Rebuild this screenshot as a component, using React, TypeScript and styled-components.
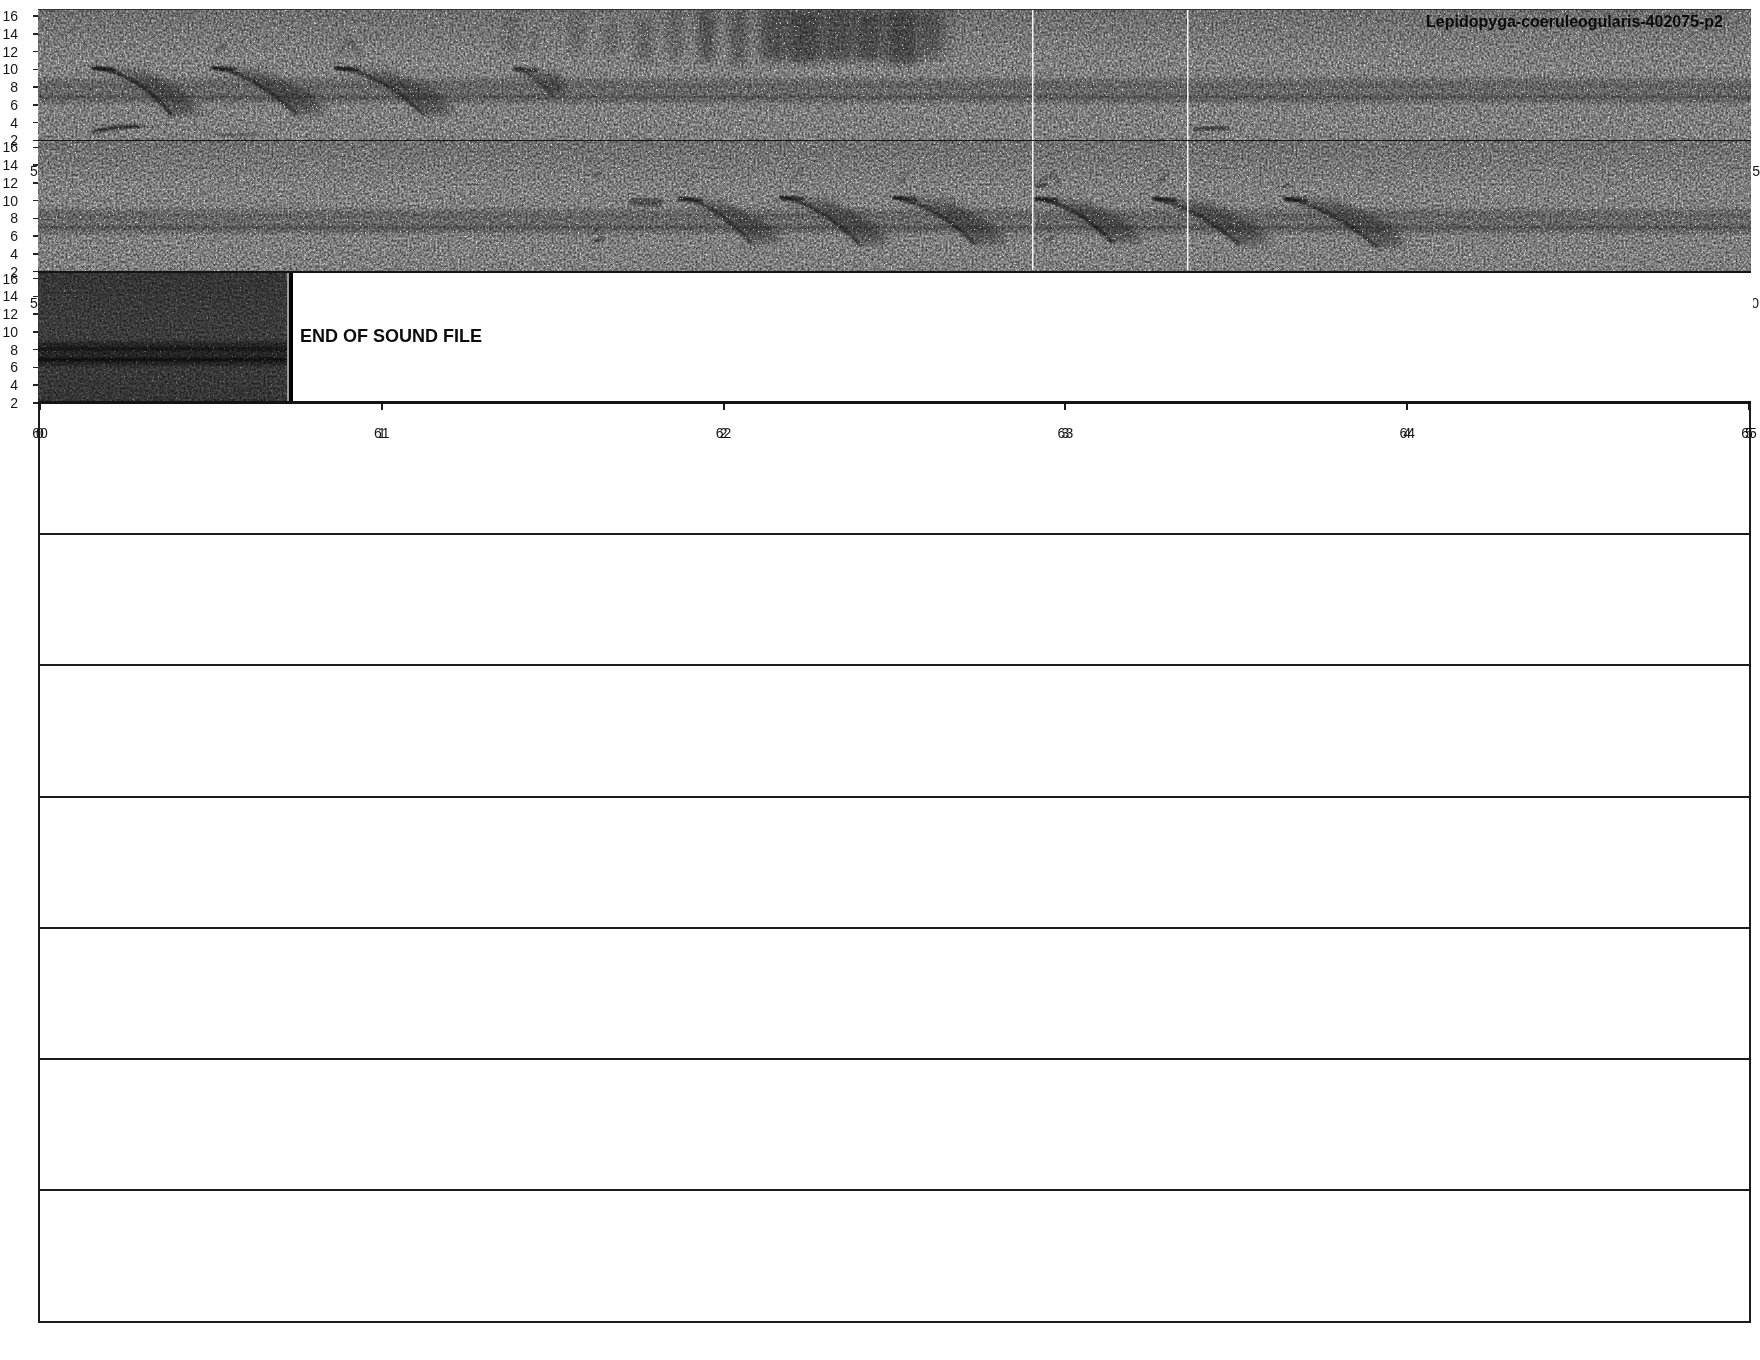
import styled, { createGlobalStyle } from "styled-components"

const GlobalStyle = createGlobalStyle`
    html, body {
        margin: 0;
        padding: 0;
        background: #fff;
    }
    body {
        font-family: "Liberation Sans", Arial, sans-serif;
        color: #151515;
    }
`
const Page = styled.div`
    width: 1760px;
    height: 1360px;
    padding-top: 10px;
    box-sizing: border-box;
    overflow: hidden;
`
const Row = styled.div`
    display: grid;
    grid-template-columns: 38px 1713px 9px;
    grid-template-rows: 131.25px;
`
const FreqAxis = styled.div`
    display: flex;
    flex-direction: column;
    justify-content: space-between;
    padding-top: 6px;
    padding-bottom: 1px;
    box-sizing: border-box;
`
const FreqLabel = styled.div`
    display: flex;
    align-items: center;
    height: 0;
    font-size: 14px;
`
const FreqText = styled.span`
    width: 18px;
    text-align: right;
`
const FreqTick = styled.i`
    width: 5px;
    height: 1.5px;
    margin-left: 15px;
    background: #222;
`
const Plot = styled.div<{ $top?: boolean; $rule: number }>`
    position: relative;
    display: flex;
    box-sizing: border-box;
    min-width: 0;
    min-height: 0;
    border-bottom: ${p => p.$rule}px solid #141414;
    ${p => p.$top && "margin-top: -1px; border-top: 1px solid #333;"}
`
const BlankPlot = styled.div`
    display: flex;
    justify-content: space-between;
    box-sizing: border-box;
    border: 2px solid #1c1c1c;
    border-top: none;
`
const Gram = styled.svg<{ $w: string; $dark?: boolean }>`
    display: block;
    width: ${p => p.$w};
    height: 100%;
    flex: none;
    background: ${p => (p.$dark ? "#363636" : "#767676")};
`
const Title = styled.div`
    position: absolute;
    top: 3px;
    right: 28px;
    font-size: 16px;
    font-weight: bold;
    color: #0c0c0c;
`
const SideMark = styled.span<{ $side: "left" | "right" }>`
    position: absolute;
    top: 22px;
    ${p => (p.$side === "left" ? "left: -8px;" : "right: -9px;")}
    font-size: 14px;
    line-height: 16px;
`
const RightMark = styled(SideMark)`
    right: -8px;
    width: 6px;
    overflow: hidden;
    direction: rtl;
`
const EndCap = styled.div`
    flex: none;
    width: 6px;
    box-sizing: border-box;
    border-left: 2px solid #9a9a9a;
    background: #000;
`
const EndNote = styled.div`
    align-self: center;
    padding: 0 0 1px 7px;
    font-size: 18px;
    font-weight: bold;
    color: #0c0c0c;
`
const TimeTick = styled.div`
    display: grid;
    grid-template-columns: 0px;
    justify-items: center;
    width: 0;
    height: 0;
`
const TimeStem = styled.i`
    grid-area: 1 / 1;
    width: 2px;
    height: 6px;
    background: #1c1c1c;
`
const TimeLabel = styled.span`
    grid-area: 1 / 1;
    margin-top: 20px;
    font-size: 14px;
    line-height: 18px;
    white-space: nowrap;
`

type Chirp = { x0: number; y0: number; cx: number; cy: number; x1: number; y1: number; smear?: number; ink?: number }
type Mark = { d: string; o: number; w?: number }
type Burst = { x: number; w: number; t: number; b: number; o: number }

const FREQS = [16, 14, 12, 10, 8, 6, 4, 2]
const SECONDS = [0, 1, 2, 3, 4, 5]

const row1Chirps: Chirp[] = [
    { x0: 92, y0: 67, cx: 136, cy: 70, x1: 172, y1: 115, ink: 0.85 },
    { x0: 212, y0: 67, cx: 250, cy: 70, x1: 297, y1: 114, ink: 0.75 },
    { x0: 335, y0: 67, cx: 378, cy: 70, x1: 425, y1: 115, ink: 0.7 },
    { x0: 514, y0: 68, cx: 530, cy: 70, x1: 552, y1: 94, smear: 0.5, ink: 0.5 },
]
const row1Marks: Mark[] = [
    { d: "M93 132 Q105 127 140 126", o: 0.85, w: 3 },
    { d: "M140 126 L160 127", o: 0.3, w: 2 },
    { d: "M215 135 L258 134", o: 0.45, w: 2.5 },
    { d: "M1194 130 Q1205 127 1228 128", o: 0.7, w: 3 },
    { d: "M94 51 L108 51", o: 0.4, w: 2.5 },
    { d: "M216 52 L226 44", o: 0.3, w: 4 },
    { d: "M338 54 L350 38 L360 54", o: 0.25, w: 4 },
    { d: "M455 70 L508 70", o: 0.42, w: 8 },
    { d: "M322 75 L340 75", o: 0.3, w: 3 },
]
const bursts: Burst[] = [
    { x: 503, w: 14, t: 14, b: 54, o: 0.3 },
    { x: 530, w: 8, t: 30, b: 52, o: 0.2 },
    { x: 570, w: 13, t: 14, b: 52, o: 0.34 },
    { x: 605, w: 14, t: 26, b: 54, o: 0.34 },
    { x: 637, w: 15, t: 20, b: 62, o: 0.42 },
    { x: 668, w: 14, t: 10, b: 60, o: 0.38 },
    { x: 698, w: 17, t: 10, b: 60, o: 0.6 },
    { x: 730, w: 17, t: 10, b: 65, o: 0.52 },
    { x: 760, w: 24, t: 10, b: 60, o: 0.45 },
    { x: 790, w: 30, t: 10, b: 62, o: 0.55 },
    { x: 825, w: 26, t: 10, b: 60, o: 0.45 },
    { x: 856, w: 24, t: 10, b: 60, o: 0.5 },
    { x: 888, w: 28, t: 10, b: 64, o: 0.58 },
    { x: 920, w: 22, t: 12, b: 50, o: 0.35 },
]
const row2Chirps: Chirp[] = [
    { x0: 678, y0: 198, cx: 712, cy: 200, x1: 752, y1: 244, ink: 0.65 },
    { x0: 780, y0: 197, cx: 820, cy: 203, x1: 860, y1: 245, ink: 0.75 },
    { x0: 893, y0: 197, cx: 940, cy: 206, x1: 975, y1: 245, smear: 1.1, ink: 0.75 },
    { x0: 1035, y0: 198, cx: 1075, cy: 203, x1: 1113, y1: 243, ink: 0.85 },
    { x0: 1153, y0: 198, cx: 1195, cy: 206, x1: 1240, y1: 245, ink: 0.75 },
    { x0: 1284, y0: 198, cx: 1330, cy: 206, x1: 1378, y1: 248, ink: 0.75 },
]
const row2Marks: Mark[] = [
    { d: "M630 200 L662 204", o: 0.4, w: 10 },
    { d: "M593 242 L604 238", o: 0.75, w: 2.5 },
    { d: "M594 232 L600 228", o: 0.5, w: 2 },
    { d: "M594 176 L602 170", o: 0.35, w: 3 },
    { d: "M685 184 L695 172", o: 0.25, w: 3 },
    { d: "M790 182 L802 168", o: 0.28, w: 3 },
    { d: "M898 184 L908 172", o: 0.32, w: 3 },
    { d: "M1036 185 L1052 172 L1060 184", o: 0.32, w: 3 },
    { d: "M1036 186 L1048 184", o: 0.65, w: 3 },
    { d: "M1045 242 L1054 238", o: 0.55, w: 2.5 },
    { d: "M1048 232 L1052 226", o: 0.35, w: 2.5 },
    { d: "M1155 186 L1168 172", o: 0.3, w: 3 },
    { d: "M1283 186 L1290 184", o: 0.55, w: 3 },
    { d: "M1368 192 L1378 192", o: 0.7, w: 3 },
    { d: "M1368 180 L1374 165", o: 0.22, w: 2 },
    { d: "M1006 246 L1032 246", o: 0.3, w: 6 },
]

const Spectrogram = ({ seed, top, width, height, w, dark, children, bandY }: {
    seed: number; top: number; width: number; height: number; w: string; dark?: boolean
    children?: React.ReactNode; bandY: number
}) => {
    const x = 38
    const tone = dark
        ? { top: "#343434", mid: "#3a3a3a", low: "#353535", band: "#000" }
        : { top: "#6c6c6c", mid: "#7d7d7d", low: "#7c7c7c", band: "#262626" }
    return (
        <Gram $w={w} $dark={dark} viewBox={`${x} ${top} ${width} ${height}`} preserveAspectRatio="none">
            <defs>
                <linearGradient id={`bed-${seed}`} x1="0" y1="0" x2="0" y2="1">
                    <stop offset="0" stopColor={tone.top} />
                    <stop offset="0.36" stopColor={tone.mid} />
                    <stop offset="0.5" stopColor={tone.mid} />
                    <stop offset="1" stopColor={tone.low} />
                </linearGradient>
                <filter id={`grain-${seed}`} x="0" y="0" width="100%" height="100%" colorInterpolationFilters="sRGB">
                    <feTurbulence type="fractalNoise" baseFrequency="0.5 0.42" numOctaves={2} seed={seed} />
                    <feColorMatrix type="matrix" values="0.8 0 0 0 0.1  0.8 0 0 0 0.1  0.8 0 0 0 0.1  0 0 0 0 1" />
                </filter>
                <filter id={`specks-${seed}`} x="0" y="0" width="100%" height="100%" colorInterpolationFilters="sRGB">
                    <feTurbulence type="fractalNoise" baseFrequency="0.55" numOctaves={2} seed={seed + 7} />
                    <feColorMatrix type="matrix" values="0 0 0 0 1  0 0 0 0 1  0 0 0 0 1  12 0 0 0 -8.4" />
                </filter>
                <filter id={`soft-${seed}`} x="-20%" y="-50%" width="140%" height="200%">
                    <feGaussianBlur stdDeviation="3.2" />
                </filter>
                <filter id={`haze-${seed}`} x="-20%" y="-50%" width="140%" height="200%">
                    <feGaussianBlur stdDeviation="8 4" />
                </filter>
                <filter id={`fine-${seed}`} x="-20%" y="-50%" width="140%" height="200%">
                    <feGaussianBlur stdDeviation="1" />
                </filter>
                <filter id={`wash-${seed}`} x="-20%" y="-50%" width="140%" height="200%">
                    <feGaussianBlur stdDeviation="1.2" />
                </filter>
            </defs>
            <rect x={x} y={top} width={width} height={height} fill={`url(#bed-${seed})`} />
            <g filter={`url(#wash-${seed})`}>
                <rect x={x - 10} y={bandY} width={width + 20} height={25} fill={tone.band} opacity={dark ? 0.35 : 0.24} />
                <rect x={x - 10} y={bandY + 6} width={width + 20} height={3} fill={tone.band} opacity={dark ? 0.55 : 0.18} />
                <rect x={x - 10} y={bandY + 17} width={width + 20} height={3} fill={tone.band} opacity={dark ? 0.75 : 0.4} />
            </g>
            {children}
            <rect x={x} y={top} width={width} height={height} filter={`url(#grain-${seed})`} style={{ mixBlendMode: "overlay" }} />
            <rect x={x} y={top} width={width} height={height} filter={`url(#specks-${seed})`} opacity={dark ? 0.3 : 0.7} />
        </Gram>
    )
}

const ChirpShape = ({ c, seed }: { c: Chirp; seed: number }) => {
    const smear = c.smear ?? 1
    const curve = `M${c.x0} ${c.y0} Q${c.cx} ${c.cy} ${c.x1} ${c.y1}`
    const shade = `${curve} L${c.x1 + 30 * smear} ${c.y1 - 2} L${c.x1 + 14 * smear} ${c.y1 - 22} L${c.cx + 12} ${c.y0 + 4} Z`
    return (
        <>
            <path d={shade} fill="#1c1c1c" opacity={0.42} filter={`url(#soft-${seed})`} />
            <path d={curve} fill="none" stroke="#0a0a0a" strokeWidth={2.6} opacity={c.ink ?? 0.8} filter={`url(#fine-${seed})`} />
            <path d={`M${c.x0} ${c.y0} L${c.x0 + 24} ${c.y0 + 2}`} stroke="#050505" strokeWidth={4} opacity={0.6} filter={`url(#fine-${seed})`} />
        </>
    )
}

const MarkShape = ({ m, seed }: { m: Mark; seed: number }) => (
    <path d={m.d} fill="none" stroke="#0d0d0d" strokeWidth={m.w ?? 2} opacity={m.o} filter={`url(#fine-${seed})`} />
)

// white splice lines run through the first two rows
const Splices = ({ top, height }: { top: number; height: number }) => (
    <>
        <rect x={1032} y={top} width={1.5} height={height} fill="#f4f4f4" />
        <rect x={1187} y={top} width={1.5} height={height} fill="#f4f4f4" />
    </>
)

const Axis = () => (
    <FreqAxis>
        {FREQS.map(f => (
            <FreqLabel key={f}>
                <FreqText>{f}</FreqText>
                <FreqTick />
            </FreqLabel>
        ))}
    </FreqAxis>
)

export default function App() {
    return (
        <Page>
            <GlobalStyle />
            <Row>
                <Axis />
                <Plot $top $rule={1}>
                    <Spectrogram seed={3} top={9} width={1713} height={131} w="100%" bandY={78}>
                        <rect x={765} y={8} width={180} height={52} fill="#1e1e1e" opacity={0.3} filter="url(#haze-3)" />
                        <g filter="url(#soft-3)">
                            {bursts.map(b => (
                                <rect key={b.x} x={b.x} y={b.t} width={b.w} height={b.b - b.t} fill="#1e1e1e" opacity={b.o * 0.7} />
                            ))}
                        </g>
                        {Array.from({ length: 9 }, (_, i) => (
                            <rect key={i} x={498} y={14 + i * 6} width={450} height={2} fill="#8a8a8a" opacity={0.2} filter="url(#fine-3)" />
                        ))}
                        {row1Chirps.map(c => <ChirpShape key={c.x0} c={c} seed={3} />)}
                        {row1Marks.map(m => <MarkShape key={m.d} m={m} seed={3} />)}
                        <Splices top={9} height={131} />
                    </Spectrogram>
                    <Title>Lepidopyga-coeruleogularis-402075-p2</Title>
                </Plot>
            </Row>
            <Row>
                <Axis />
                <Plot $rule={2}>
                    <Spectrogram seed={11} top={140} width={1713} height={131} w="100%" bandY={209}>
                        {row2Chirps.map(c => <ChirpShape key={c.x0} c={c} seed={11} />)}
                        {row2Marks.map(m => <MarkShape key={m.d} m={m} seed={11} />)}
                        <Splices top={140} height={131} />
                    </Spectrogram>
                    <SideMark $side="left">5</SideMark>
                    <SideMark $side="right">5</SideMark>
                </Plot>
            </Row>
            <Row>
                <Axis />
                <Plot $rule={3}>
                    <Spectrogram seed={23} top={271} width={249} height={131} w="249px" dark bandY={341} />
                    <EndCap />
                    <EndNote>END OF SOUND FILE</EndNote>
                    <SideMark $side="left">5</SideMark>
                    <RightMark $side="right">0</RightMark>
                </Plot>
            </Row>
            <Row>
                <span />
                <BlankPlot>
                    {SECONDS.map(s => (
                        <TimeTick key={s}>
                            <TimeStem />
                            <TimeLabel>{60 + s}</TimeLabel>
                            <TimeLabel>{s}</TimeLabel>
                        </TimeTick>
                    ))}
                </BlankPlot>
            </Row>
            {Array.from({ length: 6 }, (_, i) => (
                <Row key={i}>
                    <span />
                    <BlankPlot />
                </Row>
            ))}
        </Page>
    )
}
